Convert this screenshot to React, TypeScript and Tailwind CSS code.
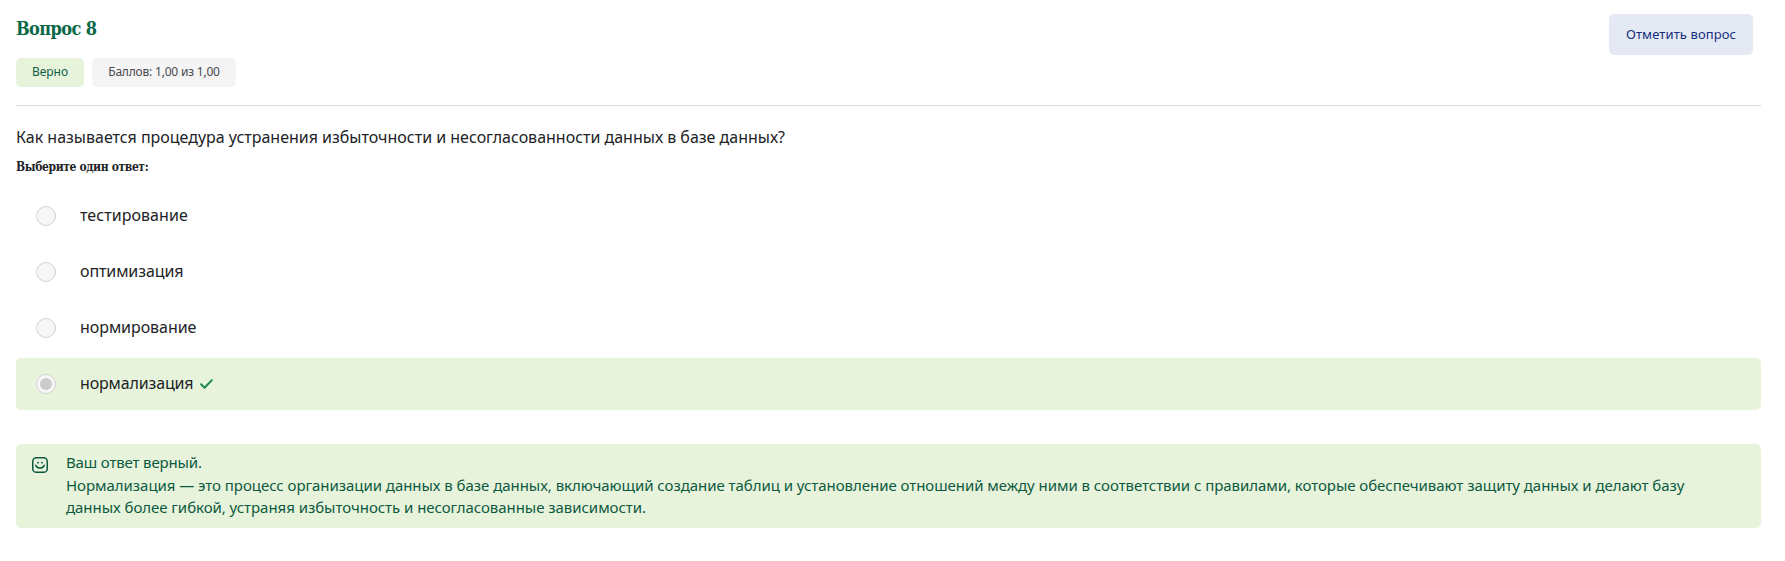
type Option = { label: string; className: string; selected?: boolean };

const options: Option[] = [
  { label: "тестирование", className: "tracking-[0.06px]" },
  { label: "оптимизация", className: "tracking-[-0.1px]" },
  { label: "нормирование", className: "tracking-[-0.06px]" },
  { label: "нормализация", className: "tracking-[-0.15px]", selected: true },
];

function Radio({ selected }: { selected?: boolean }) {
  return (
    <span
      role="radio"
      aria-checked={!!selected}
      className="flex size-5 shrink-0 items-center justify-center rounded-full border border-[#d3d3d5] bg-[#f6f6f6]"
    >
      {selected && <span className="size-3 rounded-full bg-[#cbcbcd]" />}
    </span>
  );
}

function CheckIcon() {
  return (
    <svg className="ml-[7px] h-[10px] w-[13px]" viewBox="0 0 13 10" fill="none" stroke="#1f8a4c" strokeWidth="2" strokeLinecap="round" strokeLinejoin="round">
      <path d="M1.1 5.3 4.5 8.7 11.9 1.1" />
    </svg>
  );
}

function SmileIcon() {
  return (
    <svg className="mt-[13px] size-4 shrink-0" viewBox="0 0 16 16" fill="none" stroke="#0c5a40" strokeWidth="1.5" strokeLinecap="round">
      <rect x="0.75" y="0.75" width="14.5" height="14.5" rx="3.6" />
      <path d="M3.8 8.4C4.6 10.3 6.1 11.1 8 11.1S11.4 10.3 12.2 8.4" />
      <circle cx="6" cy="5.7" r="0.9" fill="#0c5a40" stroke="none" />
      <circle cx="10" cy="5.7" r="0.9" fill="#0c5a40" stroke="none" />
    </svg>
  );
}

export default function App() {
  return (
    <main className="flex h-[561px] w-full flex-col bg-white pr-6 pl-4 font-['Noto_Sans',sans-serif] text-[#212326]">
      <header className="flex h-[106px] shrink-0 items-start justify-between border-b border-[#dcdcde] pt-[14px] pr-2">
        <div className="flex flex-col">
          <h1 className="h-[44px] font-['DejaVu_Serif_Condensed','DejaVu_Serif',serif] text-[18px] leading-[29px] font-bold tracking-[-0.6px] text-[#0a6847]">
            Вопрос 8
          </h1>
          <div className="flex gap-2">
            <span className="flex h-[29px] w-[68px] items-center justify-center rounded-[5px] bg-[#e8f3dc] pb-px text-[12px] text-[#0c6145]">
              Верно
            </span>
            <span className="flex h-[29px] w-[144px] items-center justify-center rounded-[5px] bg-[#f4f4f4] pb-px text-[12px] tracking-[-0.2px] text-[#4a4a50]">
              Баллов: 1,00 из 1,00
            </span>
          </div>
        </div>
        <button className="h-[41px] w-36 rounded-[5px] bg-[#e4e9f3] text-[13px] tracking-[0.1px] text-[#152f80]">
          Отметить вопрос
        </button>
      </header>

      <p className="mt-[19px] h-6 text-[16px] leading-6 tracking-[-0.01px]">
        Как называется процедура устранения избыточности и несогласованности данных в базе данных?
      </p>
      <h2 className="mt-[9px] h-[18px] font-['DejaVu_Serif_Condensed','DejaVu_Serif',serif] text-[12px] leading-[18px] font-bold tracking-[-0.38px]">
        Выберите один ответ:
      </h2>

      <div role="radiogroup" className="mt-[14px] flex flex-col gap-1">
        {options.map((o) => (
          <div
            key={o.label}
            className={`flex h-[52px] items-center rounded-[5px] pl-5 text-[16px] leading-6 ${o.selected ? "bg-[#e8f3dc]" : ""}`}
          >
            <Radio selected={o.selected} />
            <span className={`ml-6 pb-[3px] ${o.className}`}>{o.label}</span>
            {o.selected && <CheckIcon />}
          </div>
        ))}
      </div>

      <section className="mt-[34px] flex h-[84px] rounded-[5px] bg-[#e8f3dc] pl-4 text-[15px] leading-[22.5px] text-[#0c5a40]">
        <SmileIcon />
        <div className="ml-[18px] w-[1640px] pt-[7px]">
          <p className="tracking-[-0.15px]">Ваш ответ верный.</p>
          <p className="tracking-[-0.045px]">
            Нормализация — это процесс организации данных в базе данных, включающий создание таблиц и установление
            отношений между ними в соответствии с правилами, которые обеспечивают защиту данных и делают базу данных
            более гибкой, устраняя избыточность и несогласованные зависимости.
          </p>
        </div>
      </section>
    </main>
  );
}
